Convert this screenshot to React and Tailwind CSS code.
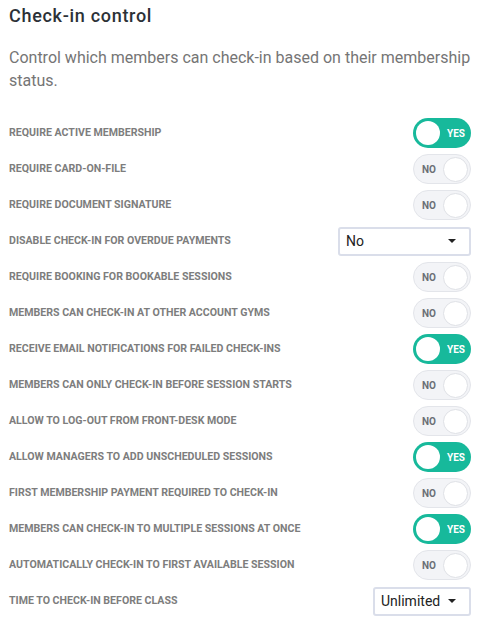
const rows = [
  { label: 'Require active membership', type: 'toggle', on: true },
  { label: 'Require card-on-file', type: 'toggle', on: false },
  { label: 'Require document signature', type: 'toggle', on: false },
  { label: 'Disable check-in for overdue payments', type: 'select', value: 'No', wide: true },
  { label: 'Require booking for bookable sessions', type: 'toggle', on: false },
  { label: 'Members can check-in at other account gyms', type: 'toggle', on: false },
  { label: 'Receive email notifications for failed check-ins', type: 'toggle', on: true },
  { label: 'Members can only check-in before session starts', type: 'toggle', on: false },
  { label: 'Allow to log-out from front-desk mode', type: 'toggle', on: false },
  { label: 'Allow managers to add unscheduled sessions', type: 'toggle', on: true },
  { label: 'First membership payment required to check-in', type: 'toggle', on: false },
  { label: 'Members can check-in to multiple sessions at once', type: 'toggle', on: true },
  { label: 'Automatically check-in to first available session', type: 'toggle', on: false },
  { label: 'Time to check-in before class', type: 'select', value: 'Unlimited', wide: false },
]

const Toggle = ({ on }) => {
  if (on) {
    return (
      <div className="flex h-[30px] w-[58px] items-center rounded-full bg-[#17b99b] pl-[3px] pr-[6px]">
        <div className="h-[24px] w-[24px] rounded-full bg-white" />
        <span className="ml-auto text-[10px] font-bold text-white">YES</span>
      </div>
    )
  }
  return (
    <div className="flex h-[30px] w-[58px] items-center rounded-full border border-[#e3e5ea] bg-[#f3f4f7] pl-[8px] pr-[2px]">
      <span className="text-[10px] font-bold text-[#6b6f76]">NO</span>
      <div className="ml-auto h-[25px] w-[25px] rounded-full border border-[#dfe1e6] bg-white" />
    </div>
  )
}

const Select = ({ value, wide }) => (
  <div
    className={`flex h-[29px] items-center rounded-[3px] border-2 border-[#dadeea] bg-white pl-[6px] pr-[13px] text-[14px] text-[#222] ${
      wide ? 'w-[133px]' : 'w-[98px]'
    }`}
  >
    <span>{value}</span>
    <svg className="ml-auto" width="8" height="4" viewBox="0 0 8 4">
      <path d="M0 0h8L4 4z" fill="#222" />
    </svg>
  </div>
)

const App = () => {
  return (
    <div
      className="h-[625px] w-[480px] bg-white pl-[9px] pr-[9px] pt-[4px]"
      style={{ fontFamily: 'Roboto, "Liberation Sans", sans-serif' }}
    >
      <h2 className="text-[18px] font-medium leading-6 tracking-[0.7px] text-[#2c3137]">Check-in control</h2>
      <p className="mt-[18px] text-[16px] leading-[23px] text-[#757575]">
        Control which members can check-in based on their membership status.
      </p>
      <div className="mt-[23px]">
        {rows.map((row) => (
          <div key={row.label} className="flex h-[36px] items-center justify-between">
            <span className="text-[10.6px] font-bold uppercase text-[#7d7d7d]">{row.label}</span>
            {row.type === 'toggle' ? <Toggle on={row.on} /> : <Select value={row.value} wide={row.wide} />}
          </div>
        ))}
      </div>
    </div>
  )
}

export default App
